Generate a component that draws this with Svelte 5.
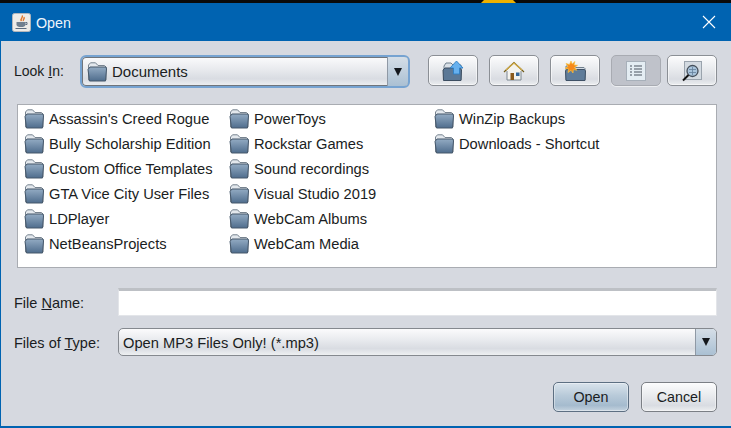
<script>
  const columns = [
    ["Assassin's Creed Rogue", "Bully Scholarship Edition", "Custom Office Templates", "GTA Vice City User Files", "LDPlayer", "NetBeansProjects"],
    ["PowerToys", "Rockstar Games", "Sound recordings", "Visual Studio 2019", "WebCam Albums", "WebCam Media"],
    ["WinZip Backups", "Downloads - Shortcut"]
  ];
</script>

{#snippet folder()}
  <svg class="folder" width="20" height="20" viewBox="0 0 20 20">
    <defs>
      <linearGradient id="fg" x1="0" y1="0" x2="0" y2="1">
        <stop offset="0" stop-color="#93abc3" />
        <stop offset="1" stop-color="#4f6d8d" />
      </linearGradient>
    </defs>
    <path d="M1.500 18V3L3.500.8h5L11 3.500h6.500L19 5v13z" fill="#e3e8ed" stroke="#77838f" stroke-width="1" />
    <path d="M2.500 19 1 7.500 3 5h16l.5 2-1 12z" fill="url(#fg)" stroke="#46586b" stroke-width="1" />
  </svg>
{/snippet}

<div class="screen">
  <div class="sliver"></div>
  <div class="dialog">
    <header class="titlebar">
      <div class="appicon">
        <svg width="19" height="19" viewBox="0 0 19 19">
          <rect x="0.500" y="0.500" width="18" height="18" rx="2" fill="#eeece8" stroke="#b3b6bb" />
          <path d="M10 2.500c2 2-2.500 3-.5 5.500M12 4c1 2-1.500 2.500-.5 4" fill="none" stroke="#e0762a" stroke-width="1.400" />
          <path d="M4.500 9h9v2.500c0 2-2 2.500-4.500 2.500s-4.500-.5-4.500-2.500z" fill="#71808f" />
          <path d="M13.500 9.500h1.500v2h-1.500M3.500 15.500h11" fill="none" stroke="#5d6d80" />
        </svg>
      </div>
      <span class="title">Open</span>
      <svg class="close" width="14" height="14" viewBox="0 0 14 14">
        <path d="M1 1l12 12M13 1 1 13" stroke="#fff" stroke-width="1.100" fill="none" />
      </svg>
    </header>

    <main class="content">
      <div class="toprow">
        <span class="label lookin">Look <u>I</u>n:</span>
        <div class="combo focused">
          <div class="combo-value">{@render folder()}<span>Documents</span></div>
          <div class="arrow"><i></i></div>
        </div>
        <div class="tools">
          <button class="tool">
            <svg width="22" height="22" viewBox="0 0 22 22">
              <path d="M2 20V6l2-3h5l2 2h8v15z" fill="#d9e0e7" stroke="#6f7e8c" />
              <path d="M1.500 20.500 1 10l2-2h15l1.500 2-.5 10.500z" fill="#5b7896" stroke="#3c4d60" />
              <path d="M14.500 1 21 8h-3.500v6h-6V8H8z" fill="#66b0ee" stroke="#2f7fc4" stroke-width=".9" />
            </svg>
          </button>
          <button class="tool">
            <svg width="22" height="22" viewBox="0 0 22 22">
              <path d="M11 2 1.500 11.500h2.500V20h14v-8.500h2.500z" fill="#f4f3ee" />
              <path d="M4 11v9h14v-9" fill="none" stroke="#7d8893" />
              <path d="M1 12 11 2.500 21 12" fill="none" stroke="#6f5a18" stroke-width="1.200" />
              <path d="M3 10 11 3l8 7" fill="none" stroke="#d2ab45" stroke-width="1.200" />
              <rect x="7.500" y="13" width="3.500" height="7" fill="#8a5a1c" />
              <rect x="13" y="12.500" width="3.500" height="3.500" fill="#33679b" />
            </svg>
          </button>
          <button class="tool">
            <svg width="22" height="22" viewBox="0 0 22 22">
              <path d="M2 20V6h8l2 1.500h8l1 1V20z" fill="#d2dae2" stroke="#6f7e8c" />
              <path d="M2 20.500 1.500 11l1-1.500h18l1 1.500-.5 9.500z" fill="#5f7c9a" stroke="#3f5166" />
              <path d="M7 1l1.200 3L11 1.500 10 5l3.500.3-3 2.200 2.300 2.800-3.500-.8L9 13l-2-2.700L4 12.500l.7-3.500L1 8.500l3-2L2 3.500l3.500 1z" fill="#f7891a" stroke="#f6c33f" stroke-width=".7" />
            </svg>
          </button>
          <button class="tool pressed">
            <svg width="20" height="20" viewBox="0 0 20 20">
              <rect x="0.500" y="0.500" width="19" height="19" fill="#e4edf3" stroke="#a7b0ba" />
              <path d="M4 5h2M8 5h8M4 8h2M8 8h8M4 11h2M8 11h8M4 14h2M8 14h8" stroke="#4b5561" stroke-width="1.100" />
            </svg>
          </button>
          <button class="tool">
            <svg width="22" height="22" viewBox="0 0 22 22">
              <rect x="3.500" y="1.500" width="17" height="18" fill="#d3dae1" stroke="#9aa3ad" />
              <circle cx="11.500" cy="11" r="5.500" fill="#a9c4dc" stroke="#46505c" stroke-width="1.300" />
              <path d="M8 9.500h7M8 12.500h7M11.500 7v8" stroke="#64809c" stroke-width=".8" />
              <path d="M7.500 15 2 20.500" stroke="#111" stroke-width="2" />
            </svg>
          </button>
        </div>
      </div>

      <section class="files">
        {#each columns as col}
          <ul class="col">
            {#each col as name}
              <li>{@render folder()}<span>{name}</span></li>
            {/each}
          </ul>
        {/each}
      </section>

      <div class="field">
        <span class="label">File <u>N</u>ame:</span>
        <div class="input"></div>
      </div>
      <div class="field type">
        <span class="label">Files of <u>T</u>ype:</span>
        <div class="combo wide">
          <div class="combo-value"><span>Open MP3 Files Only! (*.mp3)</span></div>
          <div class="arrow"><i></i></div>
        </div>
      </div>

      <footer class="actions">
        <button class="btn primary">Open</button>
        <button class="btn">Cancel</button>
      </footer>
    </main>
  </div>
</div>

<style>
  :global(body) {
    margin: 0;
    background: #0a0a0a;
  }
  .screen {
    position: relative;
    width: 731px;
    height: 428px;
    overflow: hidden;
    padding-top: 3px;
    box-sizing: border-box;
    font-family: "Liberation Sans", Arial, sans-serif;
    font-size: 14.7px;
    color: #1a1d22;
  }
  .sliver {
    position: absolute;
    left: 481px;
    top: 0;
    width: 35px;
    height: 3px;
    background: #eeb100;
    clip-path: polygon(3px 0, 32px 0, 35px 100%, 0 100%);
  }
  .dialog {
    height: 425px;
    display: flex;
    flex-direction: column;
    background: #0063b1;
  }
  .titlebar {
    height: 38px;
    flex: none;
    display: flex;
    align-items: center;
    padding: 0 15px 0 12px;
    color: #fff;
  }
  .appicon {
    width: 19px;
    height: 19px;
    display: flex;
  }
  .title {
    margin: 2px 0 0 5px;
    font-size: 14.3px;
    color: #eef5fb;
  }
  .close {
    margin-left: auto;
  }
  .content {
    flex: 1;
    margin: 0 0 2px 1px;
    padding: 14px 14px 0 13px;
    background: #d6d9e0;
    display: flex;
    flex-direction: column;
  }
  .toprow {
    display: flex;
    align-items: flex-start;
    height: 32px;
  }
  .label {
    width: 104px;
    flex: none;
    font-size: 14.5px;
    line-height: 30px;
  }
  .lookin {
    width: 66px;
    font-size: 14px;
    line-height: 33px;
  }
  .combo {
    display: flex;
    height: 28px;
    border: 1px solid #85898f;
    border-radius: 5px;
    box-sizing: border-box;
    overflow: hidden;
    background: linear-gradient(#fbfbfc, #e7e9ed 45%, #d9dce2 75%, #eef0f2);
  }
  .focused {
    width: 331px;
    height: 33px;
    font-size: 15px;
    border: 2px solid #76a3d1;
    border-radius: 6px;
    box-shadow: inset 0 0 0 1px #70757b;
  }
  .wide {
    width: 599px;
  }
  .combo-value {
    flex: 1;
    display: flex;
    align-items: center;
    padding-left: 5px;
    gap: 5px;
  }
  .wide .combo-value {
    padding-top: 1px;
    padding-left: 4px;
  }
  .arrow {
    width: 20px;
    flex: none;
    display: flex;
    align-items: center;
    justify-content: center;
    border-left: 1px solid #8f99a5;
    background: linear-gradient(#d5dee7, #aac0d3);
  }
  .arrow i {
    width: 0;
    height: 0;
    border-left: 4px solid transparent;
    border-right: 4px solid transparent;
    border-top: 8px solid #14181d;
  }
  .tools {
    display: flex;
    margin-left: 18px;
    gap: 11px;
  }
  .tool {
    width: 50px;
    height: 31px;
    padding: 0;
    display: flex;
    align-items: center;
    justify-content: center;
    border: 1px solid #8b8f95;
    border-radius: 5px;
    box-shadow: inset 0 0 0 1px rgba(255, 255, 255, 0.55);
    background: linear-gradient(#fcfcfd, #e9ebee 45%, #d9dce2 80%, #eceef0);
  }
  .tool:last-child {
    margin-left: -5px;
  }
  .pressed {
    background: #bfc2ca;
    border-color: #a8abb2;
    box-shadow: 0 1px 0 #eceef1;
  }
  .files {
    margin: 17px 0 0 3px;
    height: 164px;
    box-sizing: border-box;
    background: #fff;
    border: 1px solid #a9acb2;
    display: flex;
    padding: 1px 0 0 6px;
  }
  .col {
    list-style: none;
    margin: 0;
    padding: 0;
    width: 205px;
  }
  .col li {
    height: 25px;
    display: flex;
    align-items: center;
    gap: 5px;
    white-space: nowrap;
  }
  .folder {
    flex: none;
  }
  .field {
    display: flex;
    margin-top: 20px;
    height: 28px;
  }
  .field .label {
    width: 104px;
  }
  .field.type {
    margin-top: 12px;
  }
  .input {
    width: 599px;
    box-sizing: border-box;
    background: #fff;
    border: 1px solid #e3e5e9;
    border-top: 3px solid #bdc0c5;
  }
  .actions {
    display: flex;
    justify-content: flex-end;
    gap: 12px;
    margin-top: 26px;
  }
  .btn {
    width: 76px;
    height: 30px;
    padding: 0;
    font: inherit;
    font-size: 14.3px;
    color: inherit;
    border: 1px solid #7b7f85;
    border-radius: 5px;
    box-shadow: inset 0 0 0 1px rgba(255, 255, 255, 0.4);
    background: linear-gradient(#fcfcfd, #e9ebee 45%, #d9dce2 80%, #eceef0);
  }
  .primary {
    border-color: #5d6f82;
    background: linear-gradient(#d9e3ec, #b8cad9 45%, #a5bbce 80%, #c5d3df);
  }
</style>
